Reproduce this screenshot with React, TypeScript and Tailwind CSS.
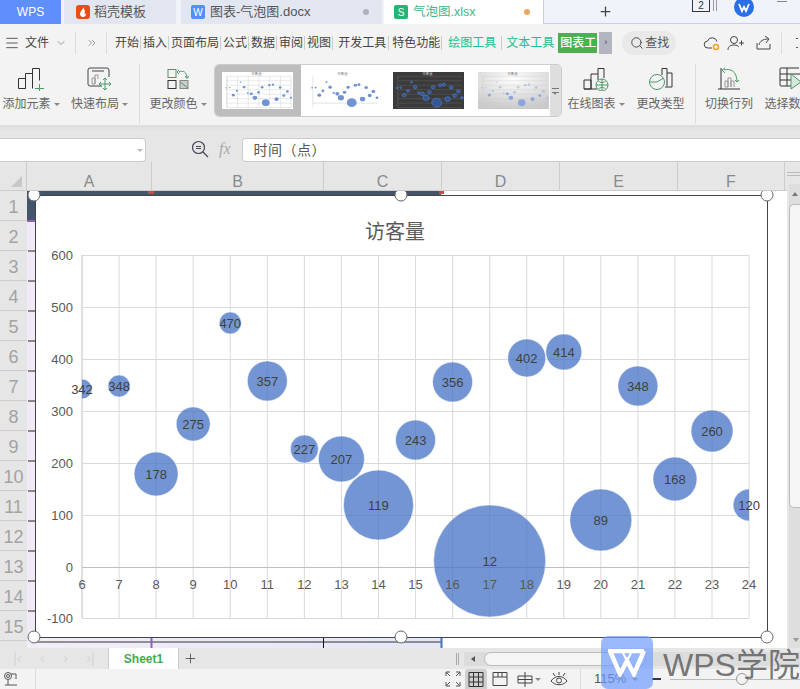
import { ChevronDown, ChevronsRight, Menu, Plus, Search } from "lucide-react";

const font = { sans: "font-['Liberation_Sans','Noto_Sans_CJK_SC',sans-serif]" };

const bubbles = [
  { x: 6, cy: 389, r: 10, label: "342" },
  { x: 7, cy: 386, r: 11, label: "348" },
  { x: 8, cy: 474, r: 22, label: "178" },
  { x: 9, cy: 424, r: 17, label: "275" },
  { x: 10, cy: 323, r: 11, label: "470" },
  { x: 11, cy: 381, r: 20, label: "357" },
  { x: 12, cy: 449, r: 14, label: "227" },
  { x: 13, cy: 459, r: 23, label: "207" },
  { x: 14, cy: 505, r: 35, label: "119" },
  { x: 15, cy: 440, r: 20, label: "243" },
  { x: 16, cy: 382, r: 20, label: "356" },
  { x: 17, cy: 561, r: 56, label: "12" },
  { x: 18, cy: 358, r: 19, label: "402" },
  { x: 19, cy: 352, r: 18, label: "414" },
  { x: 20, cy: 520, r: 31, label: "89" },
  { x: 21, cy: 386, r: 20, label: "348" },
  { x: 22, cy: 479, r: 22, label: "168" },
  { x: 23, cy: 431, r: 21, label: "260" },
  { x: 24, cy: 505, r: 16, label: "120" },
];
const px = (x: number) => 82 + (x - 6) * 37.06;
const gridY = [255, 307, 359, 411, 463, 515, 567, 618];
const yLabels = ["600", "500", "400", "300", "200", "100", "0", "-100"];
const xs = Array.from({ length: 19 }, (_, i) => i + 6);

const menuItems = ["开始", "插入", "页面布局", "公式", "数据", "审阅", "视图"];

function Caret() {
  return <span className="ml-[3px] inline-block h-0 w-0 border-x-[3px] border-t-[3px] border-x-transparent border-t-[#888] align-middle" />;
}

function RibbonButton({ label, caret, width, children }: { label: string; caret?: boolean; width: string; children: React.ReactNode }) {
  return (
    <div className={`flex shrink-0 flex-col items-center ${width}`}>
      <div className="flex h-[30px] items-center justify-center">{children}</div>
      <div className="mt-[2px] whitespace-nowrap text-[12px] leading-[16px] text-[#666]">
        {label}
        {caret && <Caret />}
      </div>
    </div>
  );
}

function Thumb({ kind }: { kind: 1 | 2 | 3 | 4 }) {
  const dark = kind === 3;
  const bg = dark ? "#3b3b3b" : kind === 4 ? "url(#thumbBg)" : "#ffffff";
  const grid = dark ? "#666" : "#cfcfcf";
  return (
    <svg width="71" height="37" viewBox="40 205 730 430" preserveAspectRatio="none" className="shrink-0">
      <defs>
        <radialGradient id="thumbBg" cx="0.5" cy="0.2" r="0.8">
          <stop offset="0" stopColor="#ffffff" />
          <stop offset="1" stopColor="#c9c9c9" />
        </radialGradient>
      </defs>
      <rect x="40" y="205" width="730" height="430" fill={bg} />
      <text x="395" y="240" textAnchor="middle" fontSize="34" fill={dark ? "#ddd" : "#777"}>访客量</text>
      {kind !== 2 && gridY.map((y) => <line key={y} x1="90" x2="750" y1={y} y2={y} stroke={grid} strokeWidth="5" />)}
      {kind === 1 && [90, 200, 310, 420, 530, 640, 750].map((x) => <line key={x} x1={x} x2={x} y1="255" y2="618" stroke={grid} strokeWidth="5" />)}
      {kind === 2 && <line x1="90" x2="750" y1="567" y2="567" stroke="#ccc" strokeWidth="6" />}
      <line x1="90" x2="90" y1="255" y2="618" stroke={grid} strokeWidth="6" />
      {bubbles.map((b) => (
        <circle
          key={b.x}
          cx={px(b.x)}
          cy={b.cy}
          r={kind === 3 || kind === 2 ? b.r * 0.9 : b.r * 0.7}
          fill={kind === 3 ? "#35558f" : kind === 4 ? "#8aa6dc" : "#6f93d3"}
          stroke={kind === 3 ? "#4a78cc" : "none"}
          strokeWidth="8"
          opacity={kind === 4 && b.r < 22 ? 0.55 : 1}
        />
      ))}
    </svg>
  );
}

function Chart() {
  return (
    <svg width="760" height="457" viewBox="27 191 760 457" className="absolute left-0 top-0">
      <defs>
        <clipPath id="plot"><rect x="82" y="200" width="667" height="430" /></clipPath>
        <linearGradient id="band" x1="0" x2="1" y1="0" y2="0">
          <stop offset="0" stopColor="#f3edf8" />
          <stop offset="1" stopColor="#e3e7f8" />
        </linearGradient>
      </defs>
      {/* selected range behind the chart */}
      <rect x="27" y="191" width="9" height="457" fill="#efeaf6" />
      <rect x="27" y="637" width="414" height="11" fill="url(#band)" />
      <rect x="27" y="191" width="9" height="30" fill="#44546a" />
      <rect x="27" y="191" width="414" height="5" fill="#44546a" />
      <rect x="27" y="220" width="9" height="2" fill="#8e5fc0" />
      {Array.from({ length: 13 }, (_, i) => 251 + i * 30).map((y) => (
        <line key={y} x1="28" x2="35" y1={y} y2={y} stroke="#222" />
      ))}
      <rect x="148" y="191" width="6" height="3" fill="#c0504d" />
      <rect x="439" y="191" width="5" height="3" fill="#c0504d" />
      <line x1="35" x2="441" y1="642" y2="642" stroke="#333" />
      <line x1="151.5" x2="151.5" y1="637" y2="648" stroke="#8e5fc0" strokeWidth="2" />
      <line x1="323.5" x2="323.5" y1="637" y2="648" stroke="#111" />
      <line x1="441.5" x2="441.5" y1="637" y2="648" stroke="#4472c4" strokeWidth="2" />

      <rect x="35.5" y="195.5" width="732" height="442" fill="#fff" stroke="#444" />
      <text x="395" y="239" textAnchor="middle" fontSize="20" fill="#595959" className={font.sans}>访客量</text>

      {xs.map((x) => (
        <line key={x} x1={px(x)} x2={px(x)} y1="255" y2="618" stroke={x === 6 ? "#bfbfbf" : "#d9d9d9"} />
      ))}
      {gridY.map((y) => (
        <line key={y} x1="82" x2="749" y1={y + 0.5} y2={y + 0.5} stroke={y === 567 ? "#bfbfbf" : "#d9d9d9"} />
      ))}
      <g clipPath="url(#plot)">
        {bubbles.map((b) => (
          <circle key={b.x} cx={px(b.x)} cy={b.cy} r={b.r} fill="#4472c4" fillOpacity="0.75" stroke="#fff" strokeOpacity="0.5" />
        ))}
      </g>
      {bubbles.map((b) => (
        <text key={b.x} x={px(b.x)} y={b.cy + 5} textAnchor="middle" fontSize="13" fill="#404040" className={font.sans}>{b.label}</text>
      ))}
      {yLabels.map((l, i) => (
        <text key={l} x="73" y={gridY[i] + 5} textAnchor="end" fontSize="13" fill="#595959" className={font.sans}>{l}</text>
      ))}
      {xs.map((x) => (
        <text key={x} x={px(x)} y="589" textAnchor="middle" fontSize="13" fill="#595959" className={font.sans}>{x}</text>
      ))}
      {[[34, 195], [401, 195], [767, 195], [34, 637], [401, 637], [767, 637]].map(([cx, cy]) => (
        <circle key={`${cx}-${cy}`} cx={cx} cy={cy} r="6" fill="#fff" stroke="#666" />
      ))}
    </svg>
  );
}

export default function App() {
  return (
    <div className={`relative flex h-[689px] w-[800px] flex-col overflow-hidden bg-[#f3f3f3] ${font.sans}`}>
      {/* title tabs */}
      <div className="flex h-[24px] shrink-0 bg-[#f1f3fa] text-[13px] text-[#555]">
        <div className="flex w-[61px] items-center justify-center bg-[#5f8ffb] text-[12px] text-white">WPS</div>
        <div className="ml-[3px] flex w-[112px] items-center bg-[#e2e6f1] pl-[12px]">
          <svg width="14" height="14" viewBox="0 0 14 14" className="mr-[4px]">
            <rect width="14" height="14" rx="3" fill="#ec4c1c" />
            <path d="M7 2c1 2-3 4-3 7 0 2 1.500 3 3 3 2 0 3.500-2 3-4-.5 1-1 1.500-1.500 1.500C9.500 7 8.500 4 7 2z" fill="#fff" />
          </svg>
          稻壳模板
        </div>
        <div className="ml-[5px] flex w-[201px] items-center bg-[#e2e6f1] pl-[10px]">
          <span className="mr-[5px] flex h-[14px] w-[14px] items-center justify-center rounded-[2px] bg-[#4f8ff7] text-[10px] text-white">W</span>
          图表-气泡图.docx
          <span className="ml-auto mr-[13px] h-[6px] w-[6px] rounded-full bg-[#b0b3bb]" />
        </div>
        <div className="ml-[2px] flex w-[160px] items-center border-r border-[#c9cfdd] bg-white pl-[10px] text-[12.500px] text-[#3fb58a]">
          <span className="mr-[5px] flex h-[14px] w-[14px] items-center justify-center rounded-[2px] bg-[#22b573] text-[10px] text-white">S</span>
          气泡图.xlsx
          <span className="ml-auto mr-[13px] h-[6px] w-[6px] rounded-full bg-[#eda562]" />
        </div>
        <div className="flex flex-1 items-center border-b border-[#c9cfdd]">
          <Plus size={15} strokeWidth={2} className="ml-[54px] text-[#444]" />
          <div className="ml-[79px] flex h-[12px] w-[18px] items-center justify-center self-start border border-[#334] border-t-0 text-[10px] leading-none text-[#334]">2</div>
          <div className="ml-[3px] mb-[12px] h-[11px] w-[4px] border-x border-[#99a]" />
          <svg width="20" height="20" viewBox="0 0 20 20" className="ml-[17px] -mt-[10px]">
            <circle cx="10" cy="10" r="10" fill="#2b6fe6" />
            <path d="M5 7l3 7 2-4 2 4 3-7" fill="none" stroke="#fff" strokeWidth="1.800" />
          </svg>
          <div className="ml-[23px] -mt-[20px] h-px w-[10px] bg-[#888]" />
        </div>
      </div>

      {/* menu row */}
      <div className="flex h-[36px] shrink-0 items-center pt-[2px] text-[12px] text-[#444]">
        <Menu size={16} strokeWidth={1.300} className="ml-[4px] shrink-0 text-[#444]" />
        <span className="ml-[5px] shrink-0 whitespace-nowrap text-[12px]">文件</span>
        <ChevronDown size={12} className="ml-[6px] shrink-0 text-[#999]" />
        <div className="ml-[8px] h-[22px] w-px shrink-0 bg-[#ddd]" />
        <ChevronsRight size={12} className="ml-[10px] shrink-0 text-[#999]" />
        <div className="ml-[8px] h-[22px] w-px shrink-0 bg-[#ddd]" />
        <div className="ml-[8px] flex shrink-0">
          {menuItems.map((m) => (
            <span key={m} className="whitespace-nowrap border-r border-[#ccc] pr-[1px] pl-0 leading-[14px] [&+span]:pl-[2px]">{m}</span>
          ))}
        </div>
        <span className="ml-[5px] shrink-0 whitespace-nowrap border-r border-[#ccc] pr-[2px] leading-[14px]">开发工具</span>
        <span className="ml-[3px] shrink-0 whitespace-nowrap border-r border-[#ccc] pr-[1px] leading-[14px]">特色功能</span>
        <span className="ml-[6px] shrink-0 whitespace-nowrap border-r border-[#ccc] pr-[5px] leading-[14px] text-[#22c08c]">绘图工具</span>
        <span className="ml-[4px] shrink-0 whitespace-nowrap leading-[14px] text-[#22c08c]">文本工具</span>
        <div className="ml-[4px] h-[20px] w-[39px] shrink-0 whitespace-nowrap bg-[#4caf50] pl-[2px] font-medium leading-[20px] text-white">图表工</div>
        <div className="ml-[2px] flex h-[22px] w-[13px] shrink-0 items-center justify-center bg-[#b3b6c0] text-[9px] text-[#444]">›</div>
        <div className="ml-[10px] flex h-[24px] w-[54px] shrink-0 items-center rounded-full bg-[#e9e9e9] pl-[8px] text-[#555]">
          <Search size={14} strokeWidth={1.600} className="mr-[1px] text-[#444]" />
          查找
        </div>
        <svg width="18" height="16" viewBox="0 0 18 16" className="ml-[27px] shrink-0" fill="none" stroke="#444" strokeWidth="1">
          <path d="M9 13H5a3.500 3.500 0 0 1-.5-7A5 5 0 0 1 14 6.500" />
          <circle cx="13" cy="12" r="2.500" stroke="#eda52a" strokeWidth="1.600" />
        </svg>
        <svg width="18" height="16" viewBox="0 0 18 16" className="ml-[6px] shrink-0" fill="none" stroke="#444" strokeWidth="1">
          <circle cx="7" cy="5" r="3.500" />
          <path d="M1 15c0-4 3-5 6-5s4 1 5 2M12 8h5M14.500 5.500v5" />
        </svg>
        <svg width="18" height="16" viewBox="0 0 18 16" className="ml-[10px] shrink-0" fill="none" stroke="#444" strokeWidth="1">
          <path d="M2 8v6h13V9M4 10c1-4 4-6 9-6M10 1l4 3-3 4" />
        </svg>
        <div className="ml-[8px] h-[22px] w-px shrink-0 bg-[#ddd]" />
        <div className="ml-[14px] h-[10px] w-[2px] shrink-0 border-y border-[#555]" />
      </div>

      {/* ribbon */}
      <div className="flex h-[65px] shrink-0 pt-[4px]">
        <RibbonButton label="添加元素" caret width="w-[62px]">
          <svg width="28" height="24" viewBox="0 0 28 24" fill="none" stroke="#333" strokeWidth="1">
            <path d="M1.500 21.500v-10h7v10zM8.500 21.500v-15h7v15M15.500 14V1.500h7v12" />
            <path d="M18 21.500h9M22.500 17v9" stroke="#4a9a6a" />
          </svg>
        </RibbonButton>
        <RibbonButton label="快速布局" caret width="ml-[5px] w-[65px]">
          <svg width="26" height="24" viewBox="0 0 26 24" fill="none" stroke="#444" strokeWidth="1">
            <path d="M15 19H3a2 2 0 0 1-2-2V3a2 2 0 0 1 2-2h17a2 2 0 0 1 2 2v7M5 4h12" />
            <path d="M5 17v-6h3v6zM8 17V8h3v4" stroke="#999" />
            <path d="M18 11v12M12.500 17h11M16 13l2-2 2 2M16 21l2 2 2-2M14 15l-2 2 2 2M22 15l2 2-2 2" stroke="#4a9a6a" />
          </svg>
        </RibbonButton>
        <div className="ml-[7px] h-[60px] w-px bg-[#ddd]" />
        <RibbonButton label="更改颜色" caret width="ml-[7px] w-[63px]">
          <svg width="22" height="22" viewBox="0 0 22 22" fill="none" stroke="#333" strokeWidth="1">
            <rect x="1" y="1.500" width="8" height="8" stroke="#4a9a6a" />
            <rect x="1" y="12.500" width="8" height="8" />
            <rect x="13" y="12.500" width="8" height="8" fill="#ccc" stroke="#888" />
            <path d="M13 14l8 6M12 4c4-2 8 0 8 6M18 8l2 2.500 2-2.500M12 2l-2 2 2 2" stroke="#4a9a6a" />
          </svg>
        </RibbonButton>
        <div className="ml-[4px] flex h-[53px] w-[348px] shrink-0 items-center overflow-hidden rounded-[5px] border border-[#ccc] bg-white">
          <div className="flex h-full w-[86px] shrink-0 items-center justify-center rounded-l-[4px] bg-[#bdbdbd]"><Thumb kind={1} /></div>
          <div className="ml-[7px]"><Thumb kind={2} /></div>
          <div className="ml-[14px]"><Thumb kind={3} /></div>
          <div className="ml-[14px]"><Thumb kind={4} /></div>
          <div className="ml-[1px] flex h-full flex-1 items-center justify-center bg-[#dedede]">
            <div className="relative h-[5px] w-[7px] border-y border-[#777] after:absolute after:left-[1px] after:top-[3px] after:border-x-[2.500px] after:border-t-[3px] after:border-x-transparent after:border-t-[#777]" />
          </div>
        </div>
        <RibbonButton label="在线图表" caret width="ml-[3px] w-[63px]">
          <svg width="26" height="24" viewBox="0 0 26 24" fill="none" stroke="#333" strokeWidth="1">
            <path d="M1 22V13h7v9zM8 22V7h7v6M15 7V1.500h6V11M1 22h13" />
            <circle cx="19" cy="18" r="6" stroke="#4a9a6a" />
            <path d="M13 18h12M19 12v12M15.500 14c2 2 5 2 7 0M15.500 22c2-2 5-2 7 0" stroke="#4a9a6a" />
          </svg>
        </RibbonButton>
        <RibbonButton label="更改类型" width="ml-[6px] w-[54px]">
          <svg width="24" height="24" viewBox="0 0 24 24" fill="none" stroke="#333" strokeWidth="1">
            <path d="M13 8V1.500h5V19M18 6h5v14H16" />
            <circle cx="8" cy="15" r="7.500" stroke="#4a9a6a" />
            <path d="M8 15l6-3.500M8 15H.5" stroke="#4a9a6a" />
          </svg>
        </RibbonButton>
        <div className="ml-[7px] h-[60px] w-px bg-[#ddd]" />
        <RibbonButton label="切换行列" width="ml-[6px] w-[56px]">
          <svg width="22" height="24" viewBox="0 0 22 24" fill="none" stroke="#333" strokeWidth="1">
            <path d="M3 1v21M0 22h22" />
            <path d="M7 20v-6h3v6zM10 20v-9h3v9M13 20v-6h3v6" stroke="#999" />
            <path d="M6 3c6-2 13 1 13 12M4 3l3-2M4 3l3 3M17 13l2 2 2-2" stroke="#4a9a6a" />
          </svg>
        </RibbonButton>
        <RibbonButton label="选择数" width="ml-[8px] w-[35px]">
          <svg width="24" height="24" viewBox="0 0 24 24" className="ml-[17px] shrink-0" fill="none" stroke="#333" strokeWidth="1">
            <path d="M20 1H2a1 1 0 0 0-1 1v16a1 1 0 0 0 1 1h12M1 7h20M1 13h12M8 1v18" />
            <path d="M12 7v15l10-7z" fill="#d6e8dc" stroke="#4a9a6a" />
          </svg>
        </RibbonButton>
      </div>
      <div className="h-[5px] shrink-0 bg-gradient-to-b from-[#dcdcdc] to-[#e6e6e6]" />

      {/* formula bar */}
      <div className="flex h-[32px] shrink-0 items-start bg-[#e6e6e6] pt-[8px]">
        <div className="flex h-[24px] w-[146px] items-center justify-end rounded-r-[4px] border border-l-0 border-[#ccc] bg-white pr-[2px]">
          <span className="h-0 w-0 border-x-[3px] border-t-[3px] border-x-transparent border-t-[#bbb]" />
        </div>
        <svg width="18" height="18" viewBox="0 0 18 18" className="ml-[45px] mt-[2px]" fill="none" stroke="#445" strokeWidth="1.200">
          <circle cx="7.500" cy="7.500" r="6" />
          <path d="M12 12l5 5M5 6.500h5M5 8.500h5" />
        </svg>
        <span className="ml-[10px] mt-[2px] font-['Liberation_Serif',serif] text-[16px] italic leading-[18px] text-[#aaa]">fx</span>
        <div className="ml-[11px] flex h-[24px] flex-1 items-center rounded-l-[4px] border border-r-0 border-[#ccc] bg-white pl-[11px] text-[14px] tracking-[0.5px] text-[#555]">时间（点）</div>
      </div>

      {/* sheet */}
      <div className="flex h-[486px] shrink-0 bg-[#e6e6e6]">
        <div className="flex w-[787px] shrink-0 flex-col">
          <div className="flex h-[29px] shrink-0 border-b border-[#ccc] text-[16px] leading-[16px] text-[#8a8a8a]">
            <div className="relative w-[27px] border-r border-[#ccc]">
              <span className="absolute left-[11px] top-[14px] h-0 w-0 border-b-[11px] border-l-[11px] border-b-[#c8c8c8] border-l-transparent" />
            </div>
            {[["A", "w-[125px]"], ["B", "w-[172px]"], ["C", "w-[118px]"], ["D", "w-[118px]"], ["E", "w-[118px]"], ["F", "w-[107px]"]].map(([c, w]) => (
              <div key={c} className={`flex items-end justify-center border-r border-[#ccc] ${w}`}>{c}</div>
            ))}
          </div>
          <div className="flex h-[457px]">
            <div className="w-[27px] shrink-0 text-[18px] text-[#a3a3a3]">
              {xs.slice(0, 15).map((_, i) => (
                <div key={i} className="flex h-[30px] items-center justify-center border-b border-[#ccc] pt-[4px]">{i + 1}</div>
              ))}
            </div>
            <div className="relative flex-1 bg-white">
              <Chart />
            </div>
          </div>
        </div>
        <div className="flex w-[13px] flex-col">
          <div className="mt-[10px] h-[4px] w-full border-y border-[#bbb]" />
          <div className="ml-[2px] mt-[8px] flex flex-1 flex-col bg-[#dedede]">
            <div className="flex h-[20px] items-center justify-center">
              <span className="h-0 w-0 border-x-[3px] border-b-[4px] border-x-transparent border-b-[#777]" />
            </div>
            <div className="h-[304px] rounded-l-[5px] rounded-r-none border border-r-0 border-[#bbb] bg-[#f5f5f5]" />
            <div className="mt-auto flex h-[16px] items-center justify-end pr-[1px]">
              <span className="h-0 w-0 border-x-[3px] border-t-[4px] border-x-transparent border-t-[#999]" />
            </div>
          </div>
        </div>
      </div>

      {/* sheet tabs */}
      <div className="flex h-[21px] shrink-0 items-center bg-[#e6e6e6]">
        <div className="flex w-[108px] items-center justify-around px-[4px] text-[14px] text-[#d5d5d5]">
          <span>|‹</span><span>‹</span><span>›</span><span>›|</span>
        </div>
        <div className="flex h-full w-[71px] items-center justify-center border-x border-[#ccc] bg-white text-[12px] font-bold text-[#3fae49]">Sheet1</div>
        <Plus size={15} strokeWidth={1.300} className="ml-[4px] text-[#444]" />
        <div className="ml-[258px] h-[12px] w-[3px] border-x border-[#aaa]" />
        <div className="ml-[5px] flex h-[14px] flex-1 items-center bg-[#dcdcdc] pl-[7px]">
          <span className="h-0 w-0 border-y-[3px] border-r-[4px] border-y-transparent border-r-[#555]" />
          <div className="ml-[9px] h-[14px] w-[162px] rounded-full border border-[#bbb] bg-[#f5f5f5]" />
        </div>
      </div>

      {/* status bar */}
      <div className="flex h-[20px] shrink-0 items-center bg-[#f3f3f3]">
        <svg width="18" height="16" viewBox="0 0 18 16" className="ml-[4px]" fill="none" stroke="#555" strokeWidth="1">
          <circle cx="4" cy="5" r="3.500" /><circle cx="4" cy="5" r="1.500" />
          <path d="M7 3h5v5M4 9v5M1 14h12" />
        </svg>
        <div className="ml-[13px] h-full w-px bg-[#ddd]" />
        <svg width="16" height="16" viewBox="0 0 16 16" className="ml-[409px]" fill="none" stroke="#555" strokeWidth="1">
          <path d="M1 5V1h4M11 1h4v4M1 11v4h4M11 15h4v-4M1 1l4 4M15 1l-4 4M1 15l4-4M15 15l-4-4" />
        </svg>
        <div className="ml-[4px] flex h-full w-[22px] items-center justify-center rounded-t-[3px] bg-[#cfcfcf]">
          <svg width="16" height="16" viewBox="0 0 16 16" fill="none" stroke="#333" strokeWidth="1">
            <path d="M1 1.500h14v14H1zM1 6h14M1 11h14M5.500 1.500v14M10.500 1.500v14" />
          </svg>
        </div>
        <svg width="16" height="16" viewBox="0 0 16 16" className="ml-[5px]" fill="none" stroke="#444" strokeWidth="1">
          <path d="M1 1.500h14v13H1zM1 6h14M6 1.500V6M10 1.500V6" />
        </svg>
        <svg width="16" height="16" viewBox="0 0 16 16" className="ml-[9px]" fill="none" stroke="#444" strokeWidth="1">
          <path d="M1 5h14v7H1zM8 1v15M1 8.500h14" />
        </svg>
        <span className="ml-[2px] h-0 w-0 border-x-[3px] border-t-[3px] border-x-transparent border-t-[#888]" />
        <svg width="18" height="16" viewBox="0 0 18 16" className="ml-[9px]" fill="none" stroke="#444" strokeWidth="1">
          <path d="M1 10c4-6 12-6 16 0-4 5-12 5-16 0z" /><circle cx="9" cy="9.500" r="2.500" />
          <path d="M9 1v3M3 2l2 3M15 2l-2 3" />
        </svg>
        <div className="ml-[12px] h-full w-px bg-[#ddd]" />
        <span className="ml-[13px] text-[13px] text-[#555]">115%</span>
        <span className="ml-[6px] h-0 w-0 border-x-[3px] border-t-[3px] border-x-transparent border-t-[#888]" />
        <div className="ml-[14px] h-[2px] w-[9px] bg-[#335]" />
        <div className="relative ml-[9px] h-px flex-1 bg-[#bbb]">
          <span className="absolute left-[66px] -top-[6px] h-[12px] w-[12px] rounded-full border border-[#999] bg-[#f3f3f3]" />
        </div>
      </div>

      {/* watermark */}
      <div className="absolute left-[601px] top-[636px] flex h-[53px] w-[52px] items-center justify-center rounded-[7px] bg-[#6f9bff]/70">
        <svg width="38" height="28" viewBox="0 0 38 28" fill="none" stroke="#fff" strokeWidth="4.500" strokeLinejoin="miter">
          <path d="M36 2H2l10 23 7-13 7 13 10-23" />
          <path d="M14 2l5 10 5-10" strokeWidth="2" />
        </svg>
      </div>
      <div className="absolute left-[663px] top-[647px] whitespace-nowrap text-[32px] leading-[36px] text-[#666]/90">WPS学院</div>
    </div>
  );
}
